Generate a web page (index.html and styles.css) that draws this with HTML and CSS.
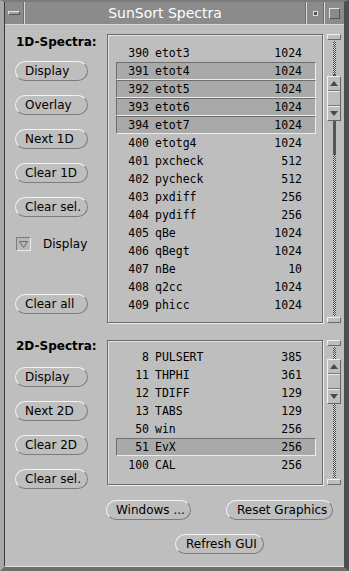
FILE: index.html
```html
<!DOCTYPE html>
<html lang="en">

<head>
    <meta charset="UTF-8">
    <title>SunSort Spectra</title>
    <link rel="stylesheet" href="styles.css">
</head>

<body>
    <div class="frame">
        <div class="win">
            <!-- Title bar -->
            <div class="titlebar">
                <div class="tb-menu"><span class="menu-bar"></span></div>
                <div class="tb-title">SunSort Spectra</div>
                <div class="tb-small"><span class="small-sq"></span></div>
                <div class="tb-max"><span class="max-sq"></span></div>
            </div>

            <div class="content">
                <!-- 1D spectra -->
                <section class="sec sec1">
                    <div class="left">
                        <div class="label">1D-Spectra:</div>
                        <button class="btn">Display</button>
                        <button class="btn">Overlay</button>
                        <button class="btn">Next 1D</button>
                        <button class="btn">Clear 1D</button>
                        <button class="btn">Clear sel.</button>
                        <div class="dropdown">
                            <span class="dd-box">
                                <svg width="13" height="12" viewBox="0 0 13 12"><path d="M2.5 3.5 H10.5 L6.5 9.5 Z" fill="none" stroke="#6a6a6a"/></svg>
                            </span>
                            <span class="dd-text">Display</span>
                        </div>
                        <button class="btn btn-all">Clear all</button>
                    </div>
                    <div class="list list1">
                        <div class="row"><span class="num">390</span><span class="name">etot3</span><span class="val">1024</span></div>
                        <div class="row sel"><span class="num">391</span><span class="name">etot4</span><span class="val">1024</span></div>
                        <div class="row sel"><span class="num">392</span><span class="name">etot5</span><span class="val">1024</span></div>
                        <div class="row sel"><span class="num">393</span><span class="name">etot6</span><span class="val">1024</span></div>
                        <div class="row sel"><span class="num">394</span><span class="name">etot7</span><span class="val">1024</span></div>
                        <div class="row"><span class="num">400</span><span class="name">etotg4</span><span class="val">1024</span></div>
                        <div class="row"><span class="num">401</span><span class="name">pxcheck</span><span class="val">512</span></div>
                        <div class="row"><span class="num">402</span><span class="name">pycheck</span><span class="val">512</span></div>
                        <div class="row"><span class="num">403</span><span class="name">pxdiff</span><span class="val">256</span></div>
                        <div class="row"><span class="num">404</span><span class="name">pydiff</span><span class="val">256</span></div>
                        <div class="row"><span class="num">405</span><span class="name">qBe</span><span class="val">1024</span></div>
                        <div class="row"><span class="num">406</span><span class="name">qBegt</span><span class="val">1024</span></div>
                        <div class="row"><span class="num">407</span><span class="name">nBe</span><span class="val">10</span></div>
                        <div class="row"><span class="num">408</span><span class="name">q2cc</span><span class="val">1024</span></div>
                        <div class="row"><span class="num">409</span><span class="name">phicc</span><span class="val">1024</span></div>
                    </div>
                    <div class="scroll">
                        <div class="cap"></div>
                        <div class="cable dots" style="height: 33px"></div>
                        <div class="cable solid" style="height: 2px"></div>
                        <div class="elevator">
                            <div class="cell up"><span class="arr-up"></span></div>
                            <div class="cell mid"></div>
                            <div class="cell down"><span class="arr-down"></span></div>
                        </div>
                        <div class="cable solid" style="height: 34px"></div>
                        <div class="cable dots grow"></div>
                        <div class="cap"></div>
                    </div>
                </section>

                <!-- 2D spectra -->
                <section class="sec sec2">
                    <div class="left">
                        <div class="label">2D-Spectra:</div>
                        <button class="btn">Display</button>
                        <button class="btn">Next 2D</button>
                        <button class="btn">Clear 2D</button>
                        <button class="btn">Clear sel.</button>
                    </div>
                    <div class="list list2">
                        <div class="row"><span class="num">8</span><span class="name">PULSERT</span><span class="val">385</span></div>
                        <div class="row"><span class="num">11</span><span class="name">THPHI</span><span class="val">361</span></div>
                        <div class="row"><span class="num">12</span><span class="name">TDIFF</span><span class="val">129</span></div>
                        <div class="row"><span class="num">13</span><span class="name">TABS</span><span class="val">129</span></div>
                        <div class="row"><span class="num">50</span><span class="name">win</span><span class="val">256</span></div>
                        <div class="row sel"><span class="num">51</span><span class="name">EvX</span><span class="val">256</span></div>
                        <div class="row"><span class="num">100</span><span class="name">CAL</span><span class="val">256</span></div>
                    </div>
                    <div class="scroll">
                        <div class="cap"></div>
                        <div class="cable dots" style="height: 12px"></div>
                        <div class="elevator">
                            <div class="cell up"><span class="arr-up"></span></div>
                            <div class="cell mid"></div>
                            <div class="cell down"><span class="arr-down"></span></div>
                        </div>
                        <div class="cable dots grow"></div>
                        <div class="cap"></div>
                    </div>
                </section>

                <!-- Bottom buttons -->
                <div class="actions">
                    <button class="btn btn-win">Windows ...</button>
                    <button class="btn btn-reset">Reset Graphics</button>
                </div>
                <div class="actions refresh">
                    <button class="btn btn-refresh">Refresh GUI</button>
                </div>
            </div>
        </div>
    </div>
</body>

</html>
```
FILE: styles.css
```css
/* OpenLook style window */

* {
    box-sizing: border-box;
}

body {
    margin: 0;
    background: #4e4e4e;
    font-family: "DejaVu Sans", sans-serif;
    font-size: 12px;
    color: #000;
}

.frame {
    width: 349px;
    height: 571px;
    background: #bebebe;
    border-top: 2px solid #7b7b7b;
    border-left: 4px solid #a9a9a9;
    border-right: 5px solid #4e4e4e;
    border-bottom: 4px solid #6e6e6e;
}

.win {
    height: 100%;
    border-left: 1px solid #3a3a3a;
    border-bottom: 1px solid #e2e2e2;
}

/* Title bar */

.titlebar {
    display: flex;
    height: 23px;
    background: #8b8b8b;
    border-bottom: 1px solid #d8d8d8;
}

.tb-menu {
    width: 19px;
    display: flex;
    align-items: center;
    justify-content: center;
    border-right: 1px solid #6e6e6e;
}

.menu-bar {
    width: 12px;
    height: 4px;
    background: #a0a0a0;
    border: 1px solid;
    border-color: #e6e6e6 #555 #555 #e6e6e6;
}

.tb-title {
    flex: 1;
    text-align: center;
    color: #fff;
    font-size: 14px;
    line-height: 22px;
    border-left: 1px solid #d8d8d8;
    border-right: 1px solid #6e6e6e;
}

.tb-small {
    width: 18px;
    display: flex;
    align-items: center;
    justify-content: center;
    border-left: 1px solid #d8d8d8;
    border-right: 1px solid #6e6e6e;
}

.small-sq {
    width: 5px;
    height: 5px;
    background: #555;
    border: 1px solid #dcdcdc;
}

.tb-max {
    width: 20px;
    display: flex;
    align-items: center;
    justify-content: center;
    border-left: 1px solid #d8d8d8;
}

.max-sq {
    width: 11px;
    height: 11px;
    border: 1px solid;
    border-color: #e4e4e4 #555 #555 #e4e4e4;
}

/* Content */

.content {
    padding-top: 9px;
}

.sec {
    display: flex;
    align-items: stretch;
}

.sec1 {
    height: 289px;
}

.sec2 {
    height: 145px;
    margin-top: 17px;
}

.left {
    width: 102px;
    padding-left: 10px;
}

.label {
    font-weight: bold;
    line-height: 16px;
    padding-left: 1px;
    margin-bottom: 11px;
}

.sec2 .label {
    margin-top: -2px;
    margin-bottom: 13px;
}

.btn {
    display: block;
    width: 73px;
    height: 20px;
    margin: 0 0 14px 0;
    padding: 0 0 0 9px;
    background: #bebebe;
    border: 1px solid;
    border-color: #f2f2f2 #7c7c7c #7c7c7c #f2f2f2;
    border-radius: 10px;
    font-family: "DejaVu Sans", sans-serif;
    font-size: 12px;
    line-height: 18px;
    color: #000;
    text-align: left;
    white-space: nowrap;
}

.dropdown {
    display: flex;
    align-items: center;
    height: 20px;
    margin-top: 17px;
    padding-left: 1px;
}

.dd-box {
    display: flex;
    width: 15px;
    height: 14px;
    border: 1px solid;
    border-color: #7c7c7c #eeeeee #eeeeee #7c7c7c;
    background: #b8b8b8;
}

.dd-text {
    margin-left: 12px;
}

.btn-all {
    margin-top: 40px;
}

/* Lists */

.list {
    width: 216px;
    height: 100%;
    border: 1px solid #6b6b6b;
    box-shadow: 1px 1px 0 #ececec, inset 1px 1px 0 #e2e2e2;
    padding: 9px 6px 0 8px;
    font-family: "DejaVu Sans Mono", monospace;
    font-size: 11.5px;
}

.list2 {
    padding-top: 7px;
}

.row {
    display: grid;
    grid-template-columns: 32px 1fr auto;
    column-gap: 6px;
    height: 18px;
    line-height: 16px;
    padding-right: 13px;
    border: 1px solid transparent;
}

.row .num {
    text-align: right;
}

.row.sel {
    background: #a9a9a9;
    border-color: #6e6e6e #ececec #ececec #6e6e6e;
}

/* Scrollbars */

.scroll {
    width: 14px;
    margin-left: 4px;
    display: flex;
    flex-direction: column;
}

.cap {
    height: 6px;
    border: 1px solid;
    border-color: #f0f0f0 #6a6a6a #6a6a6a #f0f0f0;
}

.cap:first-child {
    margin-bottom: 1px;
}

.cap:last-child {
    margin-top: 1px;
}

.cable {
    width: 3px;
    margin: 0 auto;
}

.dots {
    background: repeating-conic-gradient(#4a4a4a 0 25%, #d6d6d6 0 50%) 0 0 / 2px 2px;
}

.solid {
    background: #555;
}

.grow {
    flex: 1;
}

.elevator {
    height: 45px;
    display: flex;
    flex-direction: column;
    border: 1px solid;
    border-color: #f0f0f0 #666 #666 #f0f0f0;
}

.cell {
    flex: 1;
    display: flex;
    align-items: center;
    justify-content: center;
}

.cell.mid {
    border-top: 1px solid #ececec;
    border-bottom: 1px solid #777;
}

.up {
    border-bottom: 1px solid #777;
}

.down {
    border-top: 1px solid #ececec;
}

.arr-up {
    width: 0;
    height: 0;
    border-left: 4px solid transparent;
    border-right: 4px solid transparent;
    border-bottom: 5px solid #4a4a4a;
}

.arr-down {
    width: 0;
    height: 0;
    border-left: 4px solid transparent;
    border-right: 4px solid transparent;
    border-top: 5px solid #4a4a4a;
}

/* Bottom buttons */

.actions {
    display: flex;
    margin-top: 15px;
    padding-left: 101px;
}

.actions .btn {
    margin: 0;
}

.btn-win {
    width: 85px;
    margin-right: 35px !important;
}

.btn-reset {
    width: 107px;
    padding-left: 10px;
}

.refresh {
    margin-top: 14px;
    padding-left: 170px;
}

.btn-refresh {
    width: 89px;
    padding-left: 10px;
}
```
